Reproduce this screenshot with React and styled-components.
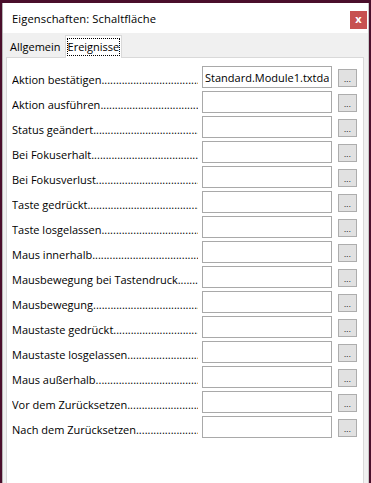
import React from "react"
import styled, { createGlobalStyle } from "styled-components"

// -----------------------------------------------------------------------------
// Data
// -----------------------------------------------------------------------------

const events = [
  { label: "Aktion bestätigen", value: "Standard.Module1.txtdatei" },
  { label: "Aktion ausführen" },
  { label: "Status geändert" },
  { label: "Bei Fokuserhalt" },
  { label: "Bei Fokusverlust" },
  { label: "Taste gedrückt" },
  { label: "Taste losgelassen" },
  { label: "Maus innerhalb" },
  { label: "Mausbewegung bei Tastendruck" },
  { label: "Mausbewegung" },
  { label: "Maustaste gedrückt" },
  { label: "Maustaste losgelassen" },
  { label: "Maus außerhalb" },
  { label: "Vor dem Zurücksetzen" },
  { label: "Nach dem Zurücksetzen" },
]

const LEADER = ".".repeat(80)

// -----------------------------------------------------------------------------
// Styles
// -----------------------------------------------------------------------------

const GlobalStyle = createGlobalStyle`
  html, body {
    margin: 0;
    height: 100%;
    overflow: hidden;
  }
  body {
    background: #4a0e2b;
    font-family: "Open Sans", "Noto Sans", sans-serif;
    font-size: 11px;
    color: #000;
  }
  #root {
    height: 100%;
  }
`

const Window = styled.div`
  box-sizing: border-box;
  margin: 3px 2px 0 2px;
  height: calc(100% - 3px);
  display: flex;
  flex-direction: column;
  background: #f0f0f0;
  border-left: 1px solid #b4b4b4;
  border-right: 1px solid #c8c8c8;
`

const TitleBar = styled.div`
  height: 30px;
  flex-shrink: 0;
  display: flex;
  align-items: center;
  justify-content: space-between;
  background: #fff;
  padding-left: 9px;
`

const Title = styled.span`
  font-size: 11.2px;
  letter-spacing: 0.1px;
`

const CloseButton = styled.div`
  width: 17px;
  height: 18px;
  margin-right: 1px;
  margin-top: 3px;
  display: flex;
  align-items: center;
  justify-content: center;
  background: #c75050;
  color: #fff;
  font-size: 11px;
  font-weight: 700;
  line-height: 1;
  padding-bottom: 2px;
  box-sizing: border-box;
`

const Body = styled.div`
  flex: 1;
  display: flex;
  flex-direction: column;
  padding: 0 4px 0 3px;
  min-height: 0;
`

const TabList = styled.div`
  height: 24px;
  flex-shrink: 0;
  display: flex;
  align-items: flex-end;
  padding-left: 1px;
`

const Tab = styled.div`
  box-sizing: border-box;
  display: flex;
  align-items: center;
  position: relative;
  ${({ $active }) =>
    $active
      ? `
    height: 23px;
    margin-bottom: -1px;
    padding: 0 1px;
    background: #fff;
    border: 1px solid #d9d9d9;
    border-bottom: none;
    z-index: 1;
  `
      : `
    height: 20px;
    padding: 0 4px 2px 3px;
  `}
`

const FocusText = styled.span`
  padding: 0 1px;
  line-height: 18px;
  outline: 1px dotted #000;
  outline-offset: -1px;
`

const Panel = styled.div`
  flex: 1;
  background: #fff;
  border: 1px solid #d9d9d9;
  border-bottom: none;
  padding: 8px 0 0 5px;
  display: flex;
  flex-direction: column;
  gap: 3px;
`

const Row = styled.div`
  display: flex;
  align-items: center;
  height: 22px;
`

const Label = styled.div`
  width: 186px;
  margin-right: 4px;
  white-space: nowrap;
  overflow: hidden;
  align-self: flex-end;
  line-height: 15px;
  padding-bottom: 1px;
  &::after {
    content: "${LEADER}";
  }
`

const Field = styled.input`
  box-sizing: border-box;
  width: 130px;
  height: 22px;
  margin: 0;
  padding: 0 2px;
  border: 1px solid #a9a9a9;
  border-radius: 0;
  background: #fff;
  font: inherit;
  color: #000;
  outline: none;
`

const MoreButton = styled.div`
  box-sizing: border-box;
  width: 19px;
  height: 18px;
  margin-left: 6px;
  margin-top: 1px;
  display: flex;
  justify-content: center;
  align-items: flex-end;
  padding-bottom: 3px;
  background: #e1e1e1;
  border: 1px solid #adadad;
  font-size: 8px;
  line-height: 8px;
  letter-spacing: 0.3px;
`

// -----------------------------------------------------------------------------
// Component
// -----------------------------------------------------------------------------

const App = () => {
  return (
    <>
      <GlobalStyle />
      <Window>
        <TitleBar>
          <Title>Eigenschaften: Schaltfläche</Title>
          <CloseButton>x</CloseButton>
        </TitleBar>
        <Body>
          <TabList>
            <Tab>Allgemein</Tab>
            <Tab $active>
              <FocusText>Ereignisse</FocusText>
            </Tab>
          </TabList>
          <Panel>
            {events.map((event) => (
              <Row key={event.label}>
                <Label>{event.label}</Label>
                <Field readOnly defaultValue={event.value || ""} />
                <MoreButton>...</MoreButton>
              </Row>
            ))}
          </Panel>
        </Body>
      </Window>
    </>
  )
}

export default App
